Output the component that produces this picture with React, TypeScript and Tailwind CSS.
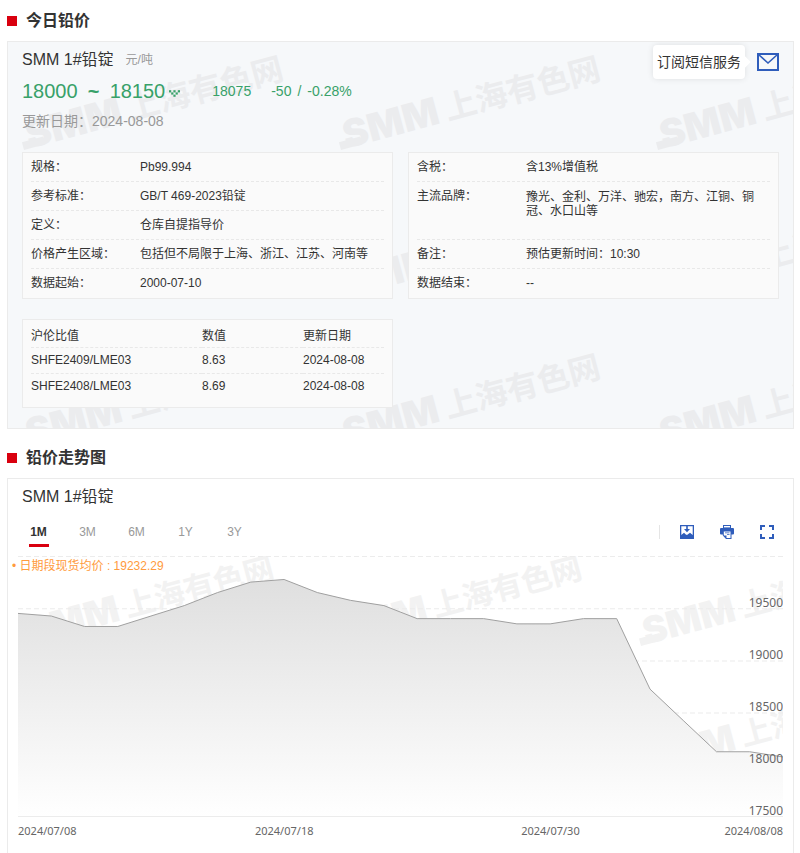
import { useState } from "react";
import clsx from "clsx";

const PERIODS = ["1M", "3M", "6M", "1Y", "3Y"];

const PRICES = [
    19450, 19425, 19325, 19325, 19425, 19525, 19650, 19750, 19775, 19650, 19575, 19525,
    19400, 19400, 19400, 19350, 19350, 19400, 19400, 18725, 18425, 18125, 18125, 18075,
];

const SPEC_LEFT = [
    { label: "规格：", value: "Pb99.994" },
    { label: "参考标准：", value: "GB/T 469-2023铅锭" },
    { label: "定义：", value: "仓库自提指导价" },
    { label: "价格产生区域：", value: "包括但不局限于上海、浙江、江苏、河南等" },
    { label: "数据起始：", value: "2000-07-10" },
];

const SPEC_RIGHT = [
    { label: "含税：", value: "含13%增值税" },
    { label: "主流品牌：", value: "豫光、金利、万洋、驰宏，南方、江铜、铜冠、水口山等", tall: true },
    { label: "备注：", value: "预估更新时间：10:30" },
    { label: "数据结束：", value: "--" },
];

const RATIOS = [
    { name: "SHFE2409/LME03", value: "8.63", date: "2024-08-08" },
    { name: "SHFE2408/LME03", value: "8.69", date: "2024-08-08" },
];

// chart scale
const MIN = 17500;
const MAX = 20000;
const W = 765;
const H = 260;
const TICKS = [19500, 19000, 18500, 18000, 17500];

const points = PRICES.map((p, i) => {
    const x = (i / (PRICES.length - 1)) * W;
    const y = H - ((p - MIN) / (MAX - MIN)) * H;
    return `${x.toFixed(1)},${y.toFixed(1)}`;
}).join(" ");

interface WatermarkProps {
    x: number;
    y: number;
    stepX: number;
    stepY: number;
    rows: number;
    scale: number;
    className: string;
}

function Watermark({ x, y, stepX, stepY, rows, scale, className }: WatermarkProps) {
    const tiles = [];
    for (let row = 0; row < rows; row++) {
        for (let col = 0; col < 3; col++) {
            tiles.push({ x: x + col * stepX, y: y + row * stepY });
        }
    }
    return (
        <svg aria-hidden="true" className={clsx("absolute inset-0 w-full h-full pointer-events-none", className)}>
            {tiles.map((t, i) => (
                <g key={i} transform={`translate(${t.x} ${t.y}) rotate(-15) scale(${scale})`}>
                    <path d="M0 0V-8H22V0Z" />
                    <text x="6" y="0" className="text-[38px] font-black font-[Inter,sans-serif]">SMM</text>
                    <text x="111" y="-1" className="text-[32px] font-bold font-['Noto_Sans_CJK_SC',sans-serif]">上海有色网</text>
                </g>
            ))}
        </svg>
    );
}

function SectionTitle({ children }: { children: string }) {
    return (
        <div className="h-[41px] flex items-center gap-[9px]">
            <span className="size-2.5 bg-[#d9000f]" />
            <h2 className="text-base font-bold text-[#333]">{children}</h2>
        </div>
    );
}

function SpecList({ rows }: { rows: { label: string; value: string; tall?: boolean }[] }) {
    return (
        <dl className="border border-[#ebebeb] bg-[#fafafa] px-2 text-xs text-[#333]">
            {rows.map((row) => (
                <div
                    key={row.label}
                    className={clsx(
                        "flex border-b border-dashed border-[#e8e8e8] last:border-b-0",
                        row.tall ? "h-[58px]" : "h-[29px]"
                    )}
                >
                    <dt className="w-[109px] shrink-0 leading-7">{row.label}</dt>
                    <dd className={clsx("flex-1", row.tall ? "pt-2 pr-2 leading-[14px]" : "leading-7")}>{row.value}</dd>
                </div>
            ))}
        </dl>
    );
}

function MailIcon() {
    return (
        <svg width="22" height="18" viewBox="0 0 22 18" fill="none" stroke="#2f5dbb" strokeWidth="2">
            <path d="M1 1H21V17H1Z" />
            <path d="M1.500 1.500L11 10L20.500 1.500" strokeWidth="1.600" />
        </svg>
    );
}

function SaveImageIcon() {
    return (
        <svg width="14" height="14" viewBox="0 0 14 14">
            <path d="M0 0H14V14H0ZM1.300 1.300V10L4 7.800L5.800 9.500L7 10L10 7.800L12.700 10V1.300Z" fill="#2f5dbb" fillRule="evenodd" />
            <path d="M6.200 1H7.800V4H10L7 7.300L4 4H6.200Z" fill="#2f5dbb" />
        </svg>
    );
}

function PrintIcon() {
    return (
        <svg width="14" height="14" viewBox="0 0 14 14">
            <path d="M3 0H11V3H3Z" fill="#2f5dbb" />
            <path d="M4 1H10V2.400H4Z" fill="#fff" />
            <path d="M1 3H13Q14 3 14 4V8.500Q14 9.500 13 9.500H11.500V14H6L2.800 10.500V9.500H1Q0 9.500 0 8.500V4Q0 3 1 3Z" fill="#2f5dbb" />
            <path d="M3.800 6.500H10.500V13H6.500V10.500H3.800Z" fill="#fff" />
            <path d="M5 7.500H9.500V8.300H5ZM7 9.300H9.500V10.100H7Z" fill="#2f5dbb" />
        </svg>
    );
}

function FullscreenIcon() {
    return (
        <svg width="14" height="14" viewBox="0 0 14 14" fill="none" stroke="#2f5dbb" strokeWidth="2">
            <path d="M1 5V1H5M9 1H13V5M13 9V13H9M5 13H1V9" />
        </svg>
    );
}

function DownArrow() {
    // dotted arrow next to a falling price
    const dots = [[0, 0], [4, 0], [8, 0], [2, 2], [6, 2], [4, 4]];
    return (
        <svg width="11" height="7" viewBox="0 0 10 6" fill="#38a169">
            {dots.map(([x, y]) => (
                <rect key={`${x}-${y}`} x={x} y={y} width="2" height="2" />
            ))}
        </svg>
    );
}

function TrendChart() {
    return (
        <div className="mx-2.5 relative">
            <div className="relative overflow-hidden">
                <Watermark x={7} y={90} stepX={308} stepY={129} rows={2} scale={0.96} className="fill-[#f2f2f2]" />
                <svg viewBox={`0 0 ${W} ${H}`} preserveAspectRatio="none" className="relative block w-full h-[261px]">
                    <defs>
                        <linearGradient id="area" x1="0" y1="0" x2="0" y2="1">
                            <stop offset="0" stopColor="#dfdfdf" />
                            <stop offset="1" stopColor="#ffffff" />
                        </linearGradient>
                    </defs>
                    {[0, 1, 2, 3, 4].map((i) => (
                        <line key={i} x1="0" x2={W} y1={i * 52 + 0.5} y2={i * 52 + 0.5} stroke="#ececec" strokeDasharray="5 3" />
                    ))}
                    <polygon points={`0,${H} ${points} ${W},${H}`} fill="url(#area)" />
                    <line x1="0" x2={W} y1={H - 0.5} y2={H - 0.5} stroke="#ececec" />
                    <polyline points={points} fill="none" stroke="#a0a0a0" vectorEffect="non-scaling-stroke" />
                </svg>
                <div className="absolute inset-0 flex flex-col font-['Noto_Sans',sans-serif] text-xs text-[#666]">
                    {TICKS.map((t) => (
                        <div key={t} className="h-[52px] flex items-end justify-end leading-[11px]">{t}</div>
                    ))}
                </div>
            </div>
            <p className="absolute top-0 -left-1.5 text-xs leading-5 text-[#ff9b3d]">
                <span>•</span> <span>日期段现货均价 : 19232.29</span>
            </p>
            <div className="relative mt-1.5 h-[30px] flex justify-between font-['Noto_Sans',sans-serif] text-[11px] leading-4 text-[#666]">
                <span>2024/07/08</span>
                <span className="absolute left-[34.800%] -translate-x-1/2">2024/07/18</span>
                <span className="absolute left-[69.600%] -translate-x-1/2">2024/07/30</span>
                <span>2024/08/08</span>
            </div>
        </div>
    );
}

export default function App() {
    const [period, setPeriod] = useState("1M");

    return (
        <main className="bg-white pl-[7px] pr-1.5 font-['Liberation_Sans','Noto_Sans_CJK_SC',sans-serif] text-[#333]">
            <section>
                <SectionTitle>今日铅价</SectionTitle>
                <div className="relative overflow-hidden border border-[#ebebeb] bg-[#f6f8fa] px-3.5 pt-[3px] pb-5">
                    <Watermark x={16} y={108} stepX={317} stepY={149} rows={3} scale={1} className="fill-[#ebecee]" />
                    <div className="relative">
                        <div className="flex justify-between items-start">
                            <div>
                                <div className="h-[30px] flex items-center gap-3">
                                    <h3 className="text-base">SMM 1#铅锭</h3>
                                    <span className="text-xs text-[#999]">元/吨</span>
                                </div>
                                <div className="h-8 flex items-center text-[#38a169]">
                                    <span className="text-xl">18000</span>
                                    <span className="text-xl w-8 text-center font-bold">~</span>
                                    <span className="text-xl">18150</span>
                                    <span className="pl-1 pt-1"><DownArrow /></span>
                                    <span className="text-sm ml-8">18075</span>
                                    <span className="text-sm ml-5">-50</span>
                                    <span className="text-sm mx-1.5">/</span>
                                    <span className="text-sm">-0.28%</span>
                                </div>
                                <p className="h-7 leading-7 text-sm text-[#999]">更新日期：2024-08-08</p>
                            </div>
                            <div className="flex items-center gap-3">
                                <div className="relative h-[34px] px-1 bg-white rounded-sm shadow-[0_0_6px_rgba(0,0,0,0.1)] text-sm leading-[34px]">
                                    订阅短信服务
                                    <span className="absolute top-[13px] -right-1 size-2 rotate-45 bg-white" />
                                </div>
                                <button type="button" aria-label="订阅短信服务" className="cursor-pointer">
                                    <MailIcon />
                                </button>
                            </div>
                        </div>

                        <div className="mt-[17px] grid grid-cols-2 gap-x-[15px] gap-y-5">
                            <SpecList rows={SPEC_LEFT} />
                            <SpecList rows={SPEC_RIGHT} />
                            <div className="border border-[#ebebeb] bg-[#fafafa] px-2 pb-2">
                                <table className="w-full table-fixed text-xs text-left">
                                    <thead>
                                        <tr className="h-[27px] border-b border-dashed border-[#e8e8e8]">
                                            <th className="w-[171px] pt-1.5 font-normal">沪伦比值</th>
                                            <th className="w-[101px] pt-1.5 font-normal">数值</th>
                                            <th className="pt-1.5 font-normal">更新日期</th>
                                        </tr>
                                    </thead>
                                    <tbody>
                                        {RATIOS.map((r) => (
                                            <tr key={r.name} className="h-[26px] border-b border-dashed border-[#e8e8e8] last:border-b-0">
                                                <td>{r.name}</td>
                                                <td>{r.value}</td>
                                                <td>{r.date}</td>
                                            </tr>
                                        ))}
                                    </tbody>
                                </table>
                            </div>
                        </div>
                    </div>
                </div>
            </section>

            <section className="pt-2">
                <SectionTitle>铅价走势图</SectionTitle>
                <div className="border border-b-0 border-[#ebebeb]">
                    <h3 className="pl-3.5 h-9 leading-9 text-base">SMM 1#铅锭</h3>
                    <div className="h-[41px] pl-1.5 pr-[19px] flex items-start justify-between">
                        <div className="flex">
                            {PERIODS.map((p) => (
                                <button
                                    key={p}
                                    type="button"
                                    onClick={() => setPeriod(p)}
                                    className={clsx(
                                        "relative w-[49px] h-[34px] text-xs cursor-pointer",
                                        p === period ? "font-bold text-[#333]" : "text-[#999]"
                                    )}
                                >
                                    {p}
                                    {p === period && (
                                        <span className="absolute bottom-0.5 left-1/2 -translate-x-1/2 w-5 h-[3px] bg-[#d9000f]" />
                                    )}
                                </button>
                            ))}
                        </div>
                        <div className="h-[34px] flex items-center gap-[26px]">
                            <span className="w-px h-3.5 -mr-1.5 bg-[#e5e5e5]" />
                            <button type="button" aria-label="保存图片" className="cursor-pointer"><SaveImageIcon /></button>
                            <button type="button" aria-label="打印" className="cursor-pointer"><PrintIcon /></button>
                            <button type="button" aria-label="全屏" className="cursor-pointer"><FullscreenIcon /></button>
                        </div>
                    </div>
                    <TrendChart />
                </div>
            </section>
        </main>
    );
}
